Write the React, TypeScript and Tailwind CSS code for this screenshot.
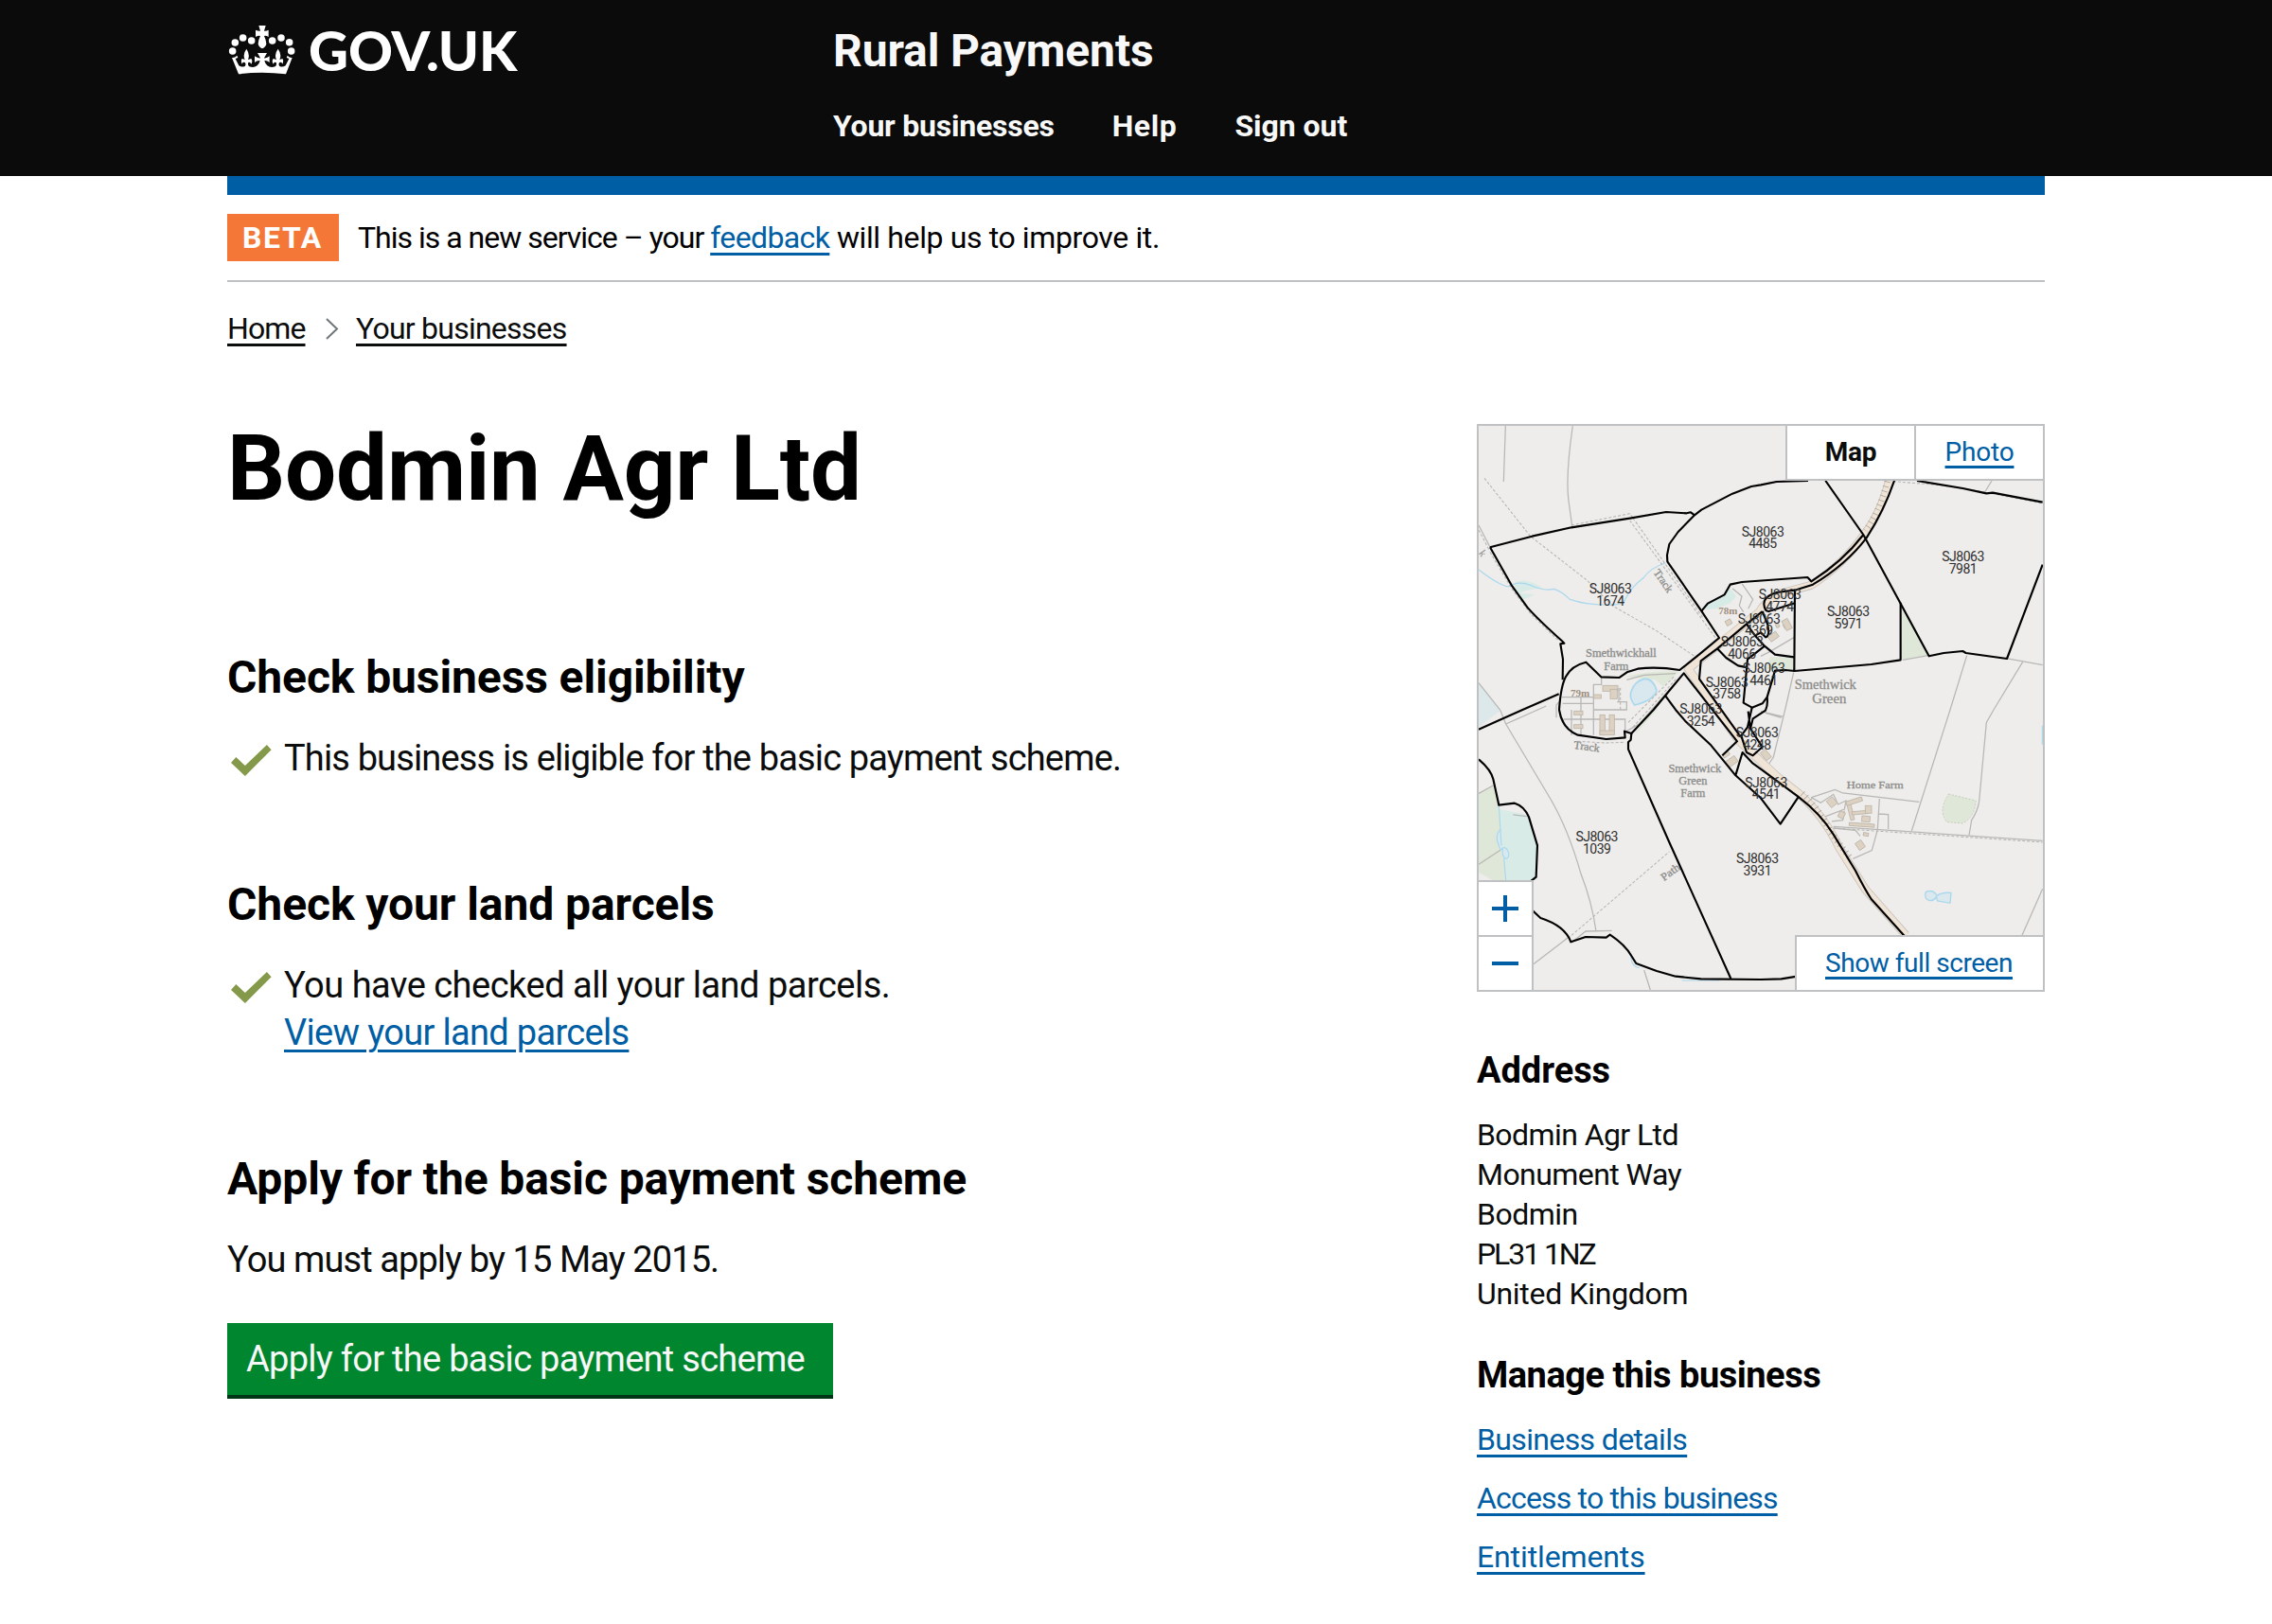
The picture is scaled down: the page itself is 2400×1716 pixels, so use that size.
import type { ReactNode } from "react";

const LINK =
  "text-[#005ea5] underline decoration-[3px] underline-offset-[5px]";

function Crown() {
  const pearls = [
    [77, 162],
    [85, 135],
    [110, 120],
    [137, 129],
    [203, 129],
    [231, 120],
    [257, 134],
    [263, 162],
  ];
  return (
    <svg viewBox="60 75 222 168" className="h-[56px] w-[74px]" fill="#fff">
      {pearls.map(([x, y]) => (
        <circle key={x} cx={x} cy={y} r="11.3" />
      ))}
      <path d="M160 81H182L177 98Q184 99 191 95V117Q183 112 177 114Q184 128 184 139Q182 150 171 154Q160 150 158 139Q158 128 165 114Q159 112 150 117V95Q158 99 165 98Z" />
      <path d="M96 235L75 183Q84 184 91 176L94 183L86 186L97 208Q106 214 116 210Q121 204 116 198Q108 196 107 203Q102 193 107 186Q112 188 116 189Q108 172 121 155Q133 172 126 189Q132 188 136 186Q142 194 136 203Q133 196 127 198Q124 206 130 211Q145 216 155 208Q162 202 164 192Q154 191 147 198V178Q157 185 165 184L156 168H186L177 184Q186 185 194 178V198Q187 191 178 192Q180 202 187 208Q197 216 212 211Q218 206 215 198Q208 196 206 203Q200 194 206 186Q210 188 216 189Q208 172 221 155Q234 172 226 189Q231 188 235 186Q240 193 235 203Q234 196 226 198Q221 204 226 210Q236 214 245 208L256 186L248 183L251 176Q258 184 266 183L246 235Q170 226 96 235Z" />
    </svg>
  );
}

function Tick() {
  return (
    <svg viewBox="0 0 60 50" className="h-[50px] w-[60px] shrink-0">
      <path d="M4 30L9.3 24L18.9 33L41.9 11L46.6 16.2L18.9 44Z" fill="#85994b" />
    </svg>
  );
}

const parcels: [number, number, string][] = [
  [141, 178.9, "1674"],
  [302, 118.5, "4485"],
  [513.5, 144.9, "7981"],
  [392.3, 203.4, "5971"],
  [320, 185, "4774"],
  [298, 210.6, "4369"],
  [280, 234.8, "4066"],
  [303, 263, "4461"],
  [264, 277.6, "3758"],
  [236.5, 306, "3254"],
  [296, 331, "4248"],
  [305.5, 383.5, "4541"],
  [296.3, 464.2, "3931"],
  [126.7, 440.8, "1039"],
];

const places: [number, number, number, number, string, number][] = [
  [487, 763, 36, 224, "Smethwickhall", 0],
  [472, 803, 36, 78, "Farm", 0],
  [1135, 863, 42, 195, "Smethwick", 0],
  [1147, 910, 42, 108, "Green", 0],
  [721, 1128, 36, 167, "Smethwick", 0],
  [715, 1167, 36, 90, "Green", 0],
  [715, 1205, 36, 78, "Farm", 0],
  [1292, 1178, 34, 180, "Home Farm", 0],
  [612, 528, 35, 80, "Track", 55],
  [377, 1058, 35, 82, "Track", 8],
  [650, 1454, 35, 66, "Path", -36],
];

const buildings: [number, number, number, number, number][] = [
  [828, 653, 18, 16, -30],
  [1010, 663, 16, 14, -30],
  [1013, 660, 20, 34, -28],
  [970, 698, 30, 20, -35],
  [983, 663, 10, 12, -28],
  [453, 862, 48, 18, 0],
  [464, 880, 22, 30, 0],
  [412, 888, 24, 12, 0],
  [352, 940, 28, 12, 0],
  [352, 983, 28, 12, 0],
  [428, 976, 16, 60, 0],
  [458, 976, 16, 60, 0],
  [443, 1003, 46, 14, 0],
  [838, 1094, 34, 22, -35],
  [820, 1072, 22, 12, -35],
  [946, 1073, 20, 32, -40],
  [1155, 1223, 24, 26, -40],
  [1186, 1263, 18, 20, 25],
  [1214, 1250, 12, 60, -14],
  [1226, 1220, 52, 13, -18],
  [1244, 1256, 50, 10, -5],
  [1271, 1246, 20, 24, 0],
  [1263, 1276, 26, 18, 5],
  [1250, 1295, 80, 10, 4],
  [1263, 1325, 16, 10, 10],
  [1245, 1359, 22, 26, -35],
];

/* Map artwork is drawn on a grid of thirds of a pixel. */
function MapDrawing() {
  return (
    <svg viewBox="0 0 600 600" className="block h-[600px] w-[600px]">
      <rect width="600" height="600" fill="#eeedeb" />
      <g transform="translate(-10 -8) scale(0.33333)" fill="none">
        {/* woodland and water */}
        <path d="M36 1195L82 1170L100 1232L122 1470H80L36 1445Z" fill="#dfe7d8" />
        <path d="M100 1245L190 1262L222 1360L218 1470H122Z" fill="#d8ebe7" />
        <path d="M36 845L105 932L36 985Z" fill="#dde8ea" />
        <path d="M752 612L765 590L815 565L832 545L852 570L835 590L790 610Z" fill="#d6eae6" />
        <path d="M150 525Q190 510 240 545Q200 545 165 560L215 565L175 582L150 550Z" fill="#d8ebe7" />
        <path d="M1375 595L1460 758L1375 772Z" fill="#dfe7d8" />
        <path d="M960 762L1036 766V804L945 802Z" fill="#dfe7d8" />
        <path d="M500 825Q580 805 672 808L620 855L595 835Z" fill="#dfe7d8" />
        <path d="M535 1000L600 915L622 890L600 930L535 1005Z" fill="#dfe7d8" />
        <path d="M1525 1197L1612 1218Q1608 1270 1570 1290L1520 1286Q1490 1250 1525 1197Z" fill="#dfe7d8" stroke="#c3cdbb" strokeWidth="3" strokeDasharray="6 5" />
        <g stroke="#a9d8ee" strokeWidth="3.5">
          <path d="M36 486Q100 535 130 540Q160 520 200 535Q240 555 275 547Q300 555 325 580Q380 598 440 597Q495 600 500 580Q520 540 560 510Q580 480 628 465" />
          <path d="M100 1232L108 1360M104 1310Q85 1330 100 1360Q105 1380 110 1370Q120 1360 130 1380Q135 1400 122 1402Q108 1395 112 1370M116 1400L122 1470" fill="#d6e8f0" />
          <path d="M560 832Q590 830 600 870Q590 900 530 915Q510 890 520 870Q530 840 560 832Z" fill="#d9e7ee" strokeWidth="5" />
          <path d="M1455 1506Q1480 1500 1488 1520Q1500 1508 1533 1510L1530 1543L1490 1536L1486 1524Q1472 1542 1455 1530Q1447 1515 1455 1506Z" fill="#dbe8ee" strokeWidth="4" />
          <path d="M518 1710Q520 1745 545 1748M1822 980V1040M680 1788L800 1788" />
        </g>

        {/* field boundaries */}
        <g stroke="#b8b7b5" strokeWidth="3.8">
          <path d="M121 30L115 207M334 30Q312 180 320 260L332 348M36 345L72 415M105 932L36 845M105 932L122 975" />
          <path d="M122 975L250 918M122 975L265 1215Q320 1310 360 1450Q395 1540 408 1632M330 1668L375 1632L458 1630M210 1736L325 1648M560 1755L580 1818" />
          <path d="M36 1195L82 1170M36 1420L105 1375M145 1263L188 1268" />
          <path d="M1460 758L1380 772M1712 768L1823 788M1583 758L1530 930M1760 778L1668 930M1034 812L1007 930M1662 204L1640 240" />
          <path d="M1530 930L1408 1314M1668 930L1645 970L1622 1220Q1618 1250 1598 1280L1590 1328M1823 1498L1758 1645" />
          <path d="M1090 1208L1165 1183L1190 1194L1432 1222M1306 1212L1300 1310L1282 1376L1222 1402M1302 1260L1334 1262V1308M1160 1300L1823 1345" />
          <path d="M1090 1208L1120 1225L1160 1198L1175 1230L1200 1218L1195 1245L1130 1270M1195 1250L1190 1280L1155 1284M1160 1305L1230 1312L1245 1330" />
          <path d="M1007 930L970 1080L950 1110M930 935L1002 952M840 545L870 570L862 600L875 620M870 530L905 580L890 610M945 940L995 955M1036 700L960 745L930 760" />
          <path d="M300 890H400V850H425V826M302 910H400M330 930V1010M360 890V1008M400 890V1010M305 960H500V1010M400 930H505V905H475M480 860V905M500 1000L545 975L680 820M505 835L560 820L660 815M282 955V915L291 905" />
        </g>
        <g stroke="#b6b5b3" strokeWidth="3.2" strokeDasharray="9 6">
          <path d="M54 196L200 380L380 520L460 600L600 680L720 760M330 345L515 308L525 322M525 322L748 640M515 330L785 700M72 430L140 545L200 625L290 712" />
          <path d="M330 1645L640 1380M350 1030L440 1035L500 1033M1130 1303L1823 1350M1350 206L1500 218L1640 240L1823 276M36 360L70 425M510 970L655 825M525 985L665 828M485 860V930" />
        </g>

        {/* roads */}
        <g strokeLinejoin="round">
          <path d="M1337 204Q1310 310 1255 378Q1190 470 1090 535L990 562Q940 590 925 620L798 722L700 800L862 1030L980 1140L1050 1195Q1130 1265 1180 1370L1262 1500L1390 1645" stroke="#c8c3bd" strokeWidth="27" />
          <path d="M1337 204Q1310 310 1255 378Q1190 470 1090 535L990 562Q940 590 925 620L798 722L700 800L862 1030L980 1140L1050 1195Q1130 1265 1180 1370L1262 1500L1390 1645" stroke="#efe4d6" strokeWidth="22" />
          <path d="M1331 206Q1304 308 1262 362M1062 1195Q1120 1250 1152 1320L1215 1402" stroke="#aaa49d" strokeWidth="20" strokeDasharray="2.5 13" />
        </g>

        {buildings.map(([x, y, w, h, r], i) => (
          <rect
            key={i}
            x={x - w / 2}
            y={y - h / 2}
            width={w}
            height={h}
            transform={`rotate(${r} ${x} ${y})`}
            fill="#ddd2c2"
            stroke="#bdb5aa"
            strokeWidth="2.5"
          />
        ))}

        {places.map(([x, y, size, w, label, r], i) => (
          <text
            key={i}
            x={x}
            y={y}
            fontSize={size}
            textLength={w}
            lengthAdjust="spacingAndGlyphs"
            textAnchor="middle"
            transform={`rotate(${r} ${x} ${y})`}
            fill="#8c8c8a"
            stroke="#8c8c8a"
            strokeWidth="0.9"
            fontFamily="'Liberation Serif', serif"
          >
            {label}
          </text>
        ))}
        <g fill="#a08f7e" fontSize="33" fontWeight="700" fontFamily="'Liberation Serif', serif" textAnchor="middle">
          <text x="826" y="628">78m</text>
          <text x="357" y="887">79m</text>
          <text x="40" y="440" fill="#8c8c8a" fontWeight="400" transform="rotate(55 40 440)">k</text>
        </g>

        {/* parcel outlines */}
        <g stroke="#000" strokeWidth="6.4" strokeLinejoin="round">
          <path d="M72 415L205 380L330 352L520 322L630 303L695 307L708 304L720 313" />
          <path d="M1080 204L980 207L930 217L900 222L840 245L742 296L720 313L668 366L640 405L633 440L634 460L742 617L798 702L738 752L673 804Q600 792 540 800L508 810L482 828L424 826L376 779Q330 790 312 825Q296 855 291 930Q300 990 350 1010L440 1023L500 1018L498 998L520 1005L590 930L686 814L855 1030L808 1075" />
          <path d="M72 415L140 535L190 605Q220 640 300 712L307 719L295 721L303 770L302 835M36 992L175 930L290 880" />
          <path d="M742 617L762 593L815 565L833 533L870 525L1078 510L1090 523Q1190 460 1255 375M1135 204L1255 375L1463 760L1510 750L1570 744L1580 750L1710 768L1823 470" />
          <path d="M1425 204L1570 228L1645 244L1665 242L1823 272M1353 204Q1320 300 1265 385Q1200 470 1095 533L1042 550L980 558Q940 570 940 595Q942 618 955 618L1038 592" />
          <path d="M1373 590V772L1280 786L1037 807L1008 804L975 806L968 830L950 890L935 910L902 923L875 908L888 770L942 728M1038 548L1036 807" />
          <path d="M935 618L885 658L792 736L740 775L735 832L862 1010M935 618L952 660L955 685Q952 700 945 700L930 685L912 695M885 658L912 695L942 728L975 755L1035 763M792 736L820 765L858 790L888 796" />
          <path d="M950 890Q953 915 945 932L905 958L897 990L935 1048L905 1075L885 1065L868 1012L888 985L902 923M862 1010L872 1020M890 935L897 990" />
          <path d="M628 886L660 930L690 965L770 1040L850 1138L930 1210L992 1292L1048 1208M850 1138L872 1065L905 1100L930 1118L1048 1205Q1120 1260 1160 1325L1230 1440Q1260 1500 1280 1530L1390 1652" />
          <path d="M520 1005L518 1025L510 1033V1055L640 1350L835 1782" />
          <path d="M36 1087Q75 1120 82 1150L100 1232L150 1226Q180 1235 195 1270L222 1360L218 1460L200 1474M200 1560L232 1590Q310 1615 328 1666L375 1650L440 1652L452 1643Q500 1675 520 1710L535 1734L600 1758L660 1775L740 1783L930 1785L995 1783L1050 1774" />
        </g>
      </g>
      <g className="fill-[#2f2f2f] font-[Roboto,sans-serif] text-[14px] tracking-[-0.5px]" textAnchor="middle">
        {parcels.map(([x, y, id]) => (
          <text key={id} x={x} y={y}>
            SJ8063
            <tspan x={x} dy="12.8">
              {id}
            </tspan>
          </text>
        ))}
      </g>
    </svg>
  );
}

function MapPanel() {
  return (
    <div className="relative h-[600px] w-[600px] overflow-hidden">
      <MapDrawing />
      <div className="pointer-events-none absolute inset-0 border-2 border-[#bfc1c3]" />
      <div className="absolute top-0 right-0 flex h-[60px] border-2 border-[#bfc1c3] bg-white text-[28px] leading-[55px]">
        <div className="w-[134px] text-center font-bold tracking-[-0.3px] text-[#0b0c0c]">
          Map
        </div>
        <div className="w-[136px] border-l-2 border-[#bfc1c3] text-center tracking-[-0.2px]">
          <a className={`${LINK} underline-offset-[4px]`}>Photo</a>
        </div>
      </div>
      <div className="absolute bottom-0 left-0 w-[60px] border-2 border-[#bfc1c3] bg-white">
        <svg viewBox="0 0 56 56" className="h-[56px] w-[56px]" stroke="#005ea5" strokeWidth="4">
          <path d="M14 28H42M28 14V42" />
        </svg>
        <svg viewBox="0 0 56 56" className="box-content h-[56px] w-[56px] border-t-2 border-[#bfc1c3]" stroke="#005ea5" strokeWidth="4">
          <path d="M14 28H42" />
        </svg>
      </div>
      <div className="absolute right-0 bottom-0 h-[60px] w-[264px] border-2 border-[#bfc1c3] bg-white pl-[30px] text-[28px] leading-[55px] tracking-[-0.45px]">
        <a className={`${LINK} underline-offset-[4px]`}>Show full screen</a>
      </div>
    </div>
  );
}

function Heading({ children, track }: { children: ReactNode; track: string }) {
  return (
    <h2 className={`text-[48px] leading-[60px] font-bold text-black ${track}`}>
      {children}
    </h2>
  );
}

export default function App() {
  return (
    <div className="h-[1716px] w-[2400px] overflow-hidden bg-white font-[Roboto,sans-serif] text-[32px] text-[#0b0c0c]">
      <header className="flex h-[186px] bg-[#0b0b0b] pl-[240px] text-white">
        <div className="flex w-[640px] pt-[25px]">
          <Crown />
          <span className="ml-[12px] font-[Lato,sans-serif] text-[58px] leading-[56px] font-black tracking-[-0.1px]">
            GOV.UK
          </span>
        </div>
        <div className="pt-[29px] text-[#f8f8f8]">
          <div className="text-[48px] leading-[50px] font-bold tracking-[-0.12px]">
            Rural Payments
          </div>
          <nav className="mt-[34px] flex gap-[61px] leading-[40px] font-bold">
            <a className="tracking-[-0.23px]">Your businesses</a>
            <a className="tracking-[0.6px]">Help</a>
            <a className="tracking-[-0.05px]">Sign out</a>
          </nav>
        </div>
      </header>

      <div className="mx-[240px]">
        <div className="h-[20px] bg-[#005ea5]" />
        <div className="flex h-[92px] border-b-2 border-[#bfc1c3] pt-[20px] leading-[50px]">
          <strong className="h-[50px] w-[118px] bg-[#f47738] pl-[16px] tracking-[1.6px] text-white">
            BETA
          </strong>
          <p className="ml-[20px] text-black">
            <span className="tracking-[-1px]">This is a new service – your </span>
            <a className={`${LINK} tracking-[-0.62px]`}>feedback</a>
            <span className="tracking-[-0.38px]"> will help us to improve it.</span>
          </p>
        </div>

        <nav className="mt-[29px] flex leading-[40px]">
          <a className="w-[82px] tracking-[-0.9px] underline decoration-[3px] underline-offset-[5px]">
            Home
          </a>
          <svg viewBox="0 0 54 40" className="h-[40px] w-[54px]" fill="none" stroke="#6f777b" strokeWidth="2">
            <path d="M23 10L34 20.500L23 31" />
          </svg>
          <a className="tracking-[-0.76px] underline decoration-[3px] underline-offset-[5px]">
            Your businesses
          </a>
        </nav>

        <main className="mt-[81px] flex justify-between">
          <div className="text-[38px] leading-[50px]">
            <h1 className="text-[96px] leading-[94px] font-bold tracking-[-0.19px] text-black">
              Bodmin Agr Ltd
            </h1>

            <section className="mt-[144px]">
              <Heading track="tracking-[-0.1px]">Check business eligibility</Heading>
              <div className="mt-[30px] flex">
                <Tick />
                <p className="tracking-[-0.85px]">
                  This business is eligible for the basic payment scheme.
                </p>
              </div>
            </section>

            <section className="mt-[100px]">
              <Heading track="tracking-[-0.08px]">Check your land parcels</Heading>
              <div className="mt-[30px] flex">
                <Tick />
                <div>
                  <p className="tracking-[-0.5px]">
                    You have checked all your land parcels.
                  </p>
                  <a className={`${LINK} tracking-[-0.68px]`}>View your land parcels</a>
                </div>
              </div>
            </section>

            <section className="mt-[100px]">
              <Heading track="tracking-[-0.12px]">
                Apply for the basic payment scheme
              </Heading>
              <p className="mt-[30px] tracking-[-0.91px]">You must apply by 15 May 2015.</p>
              <button className="mt-[42px] block h-[80px] w-[640px] border-b-4 border-[#003618] bg-[#00862f] pb-[1px] pl-[20px] text-left tracking-[-0.72px] text-[#f8f8f8]">
                Apply for the basic payment scheme
              </button>
            </section>
          </div>

          <aside className="w-[600px]">
            <MapPanel />
            <h3 className="mt-[58px] text-[38px] leading-[50px] font-bold tracking-[-0.05px] text-black">
              Address
            </h3>
            <address className="mt-[22px] leading-[42px] not-italic">
              <div className="tracking-[-0.58px]">Bodmin Agr Ltd</div>
              <div className="tracking-[-0.56px]">Monument Way</div>
              <div className="tracking-[-0.52px]">Bodmin</div>
              <div className="tracking-[-2.09px]">PL31 1NZ</div>
              <div className="tracking-[-0.3px]">United Kingdom</div>
            </address>
            <h3 className="mt-[40px] text-[38px] leading-[50px] font-bold tracking-[-0.5px] text-black">
              Manage this business
            </h3>
            <ul className="mt-[12px] leading-[62px]">
              <li>
                <a className={`${LINK} tracking-[-0.64px]`}>Business details</a>
              </li>
              <li>
                <a className={`${LINK} tracking-[-0.82px]`}>Access to this business</a>
              </li>
              <li>
                <a className={`${LINK} tracking-[-0.12px]`}>Entitlements</a>
              </li>
            </ul>
          </aside>
        </main>
      </div>
    </div>
  );
}
